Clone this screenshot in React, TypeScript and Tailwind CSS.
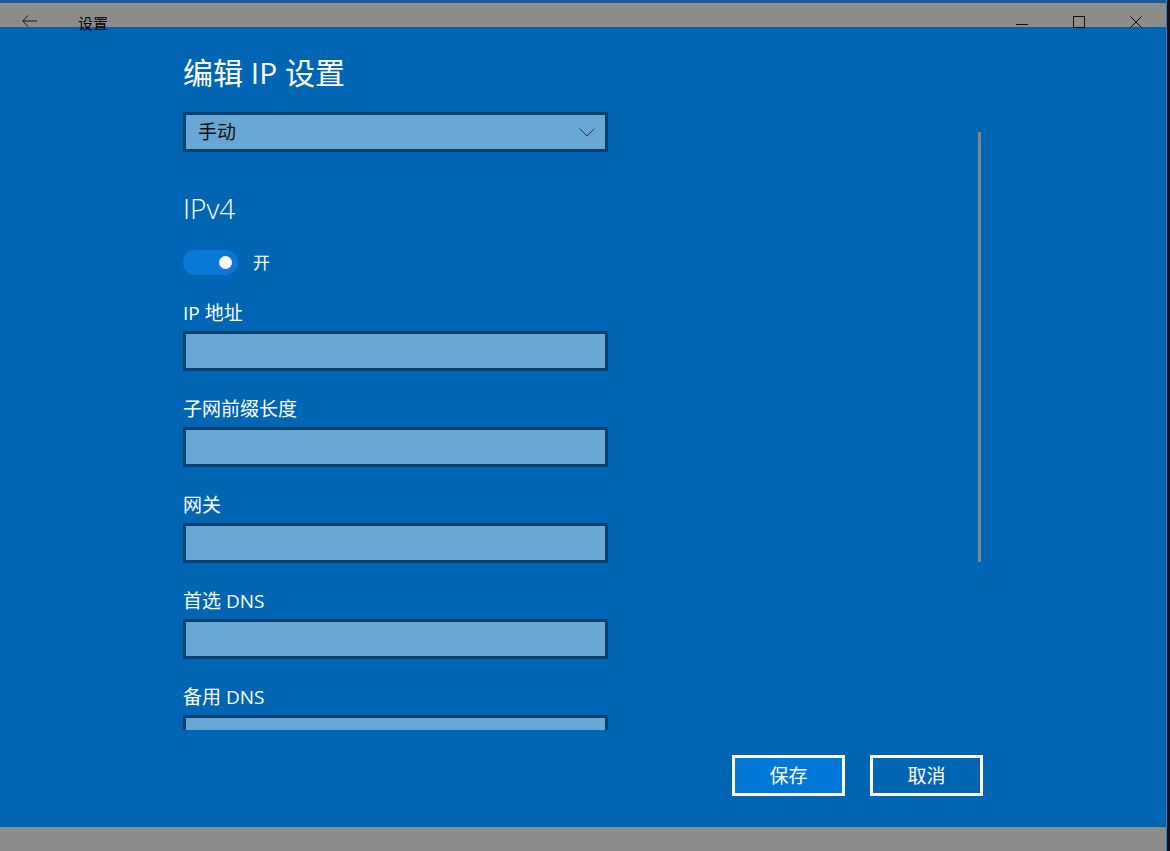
const font = "font-['Open_Sans','Noto_Sans_CJK_SC',sans-serif]";

function TitleBar() {
  return (
    <div className="relative z-10 flex h-[24px] items-start bg-[#8c8c8c] pl-[22px] pr-[24px] text-black">
      <svg viewBox="0 0 15 12" className="mt-[12px] h-[12px] w-[15px]" aria-hidden="true">
        <path d="M6 0.5 L0.8 6 L6 11.5 M0.8 6 H15" fill="none" stroke="#111" strokeWidth="1" />
      </svg>
      <span className="ml-[41px] mt-[10px] text-[15px] leading-[20px]">设置</span>
      <div className="flex-1" />
      <svg viewBox="0 0 12 12" className="mt-[15px] h-[12px] w-[12px]" aria-hidden="true">
        <line x1="0" y1="6.5" x2="12" y2="6.5" stroke="#111" strokeWidth="1" />
      </svg>
      <svg viewBox="0 0 12 12" className="ml-[45px] mt-[13px] h-[12px] w-[12px]" aria-hidden="true">
        <rect x="0.5" y="0.5" width="11" height="11" fill="none" stroke="#111" strokeWidth="1" />
      </svg>
      <svg viewBox="0 0 12 12" className="ml-[45px] mt-[13px] h-[12px] w-[12px]" aria-hidden="true">
        <path d="M0.5 0.5 L11.5 11.5 M11.5 0.5 L0.5 11.5" fill="none" stroke="#111" strokeWidth="1" />
      </svg>
    </div>
  );
}

function Field({ label }: { label: string }) {
  return (
    <div className="flex flex-col">
      <p className="mt-[26px] text-[19px] leading-[24px] text-white">{label}</p>
      <div className="mt-[6px] h-[40px] w-[425px] shrink-0 border-[3px] border-[#0a3f6e] bg-[#68a6d3]" />
    </div>
  );
}

export default function App() {
  return (
    <div className={`flex h-[851px] w-[1170px] bg-[#11141c] ${font}`}>
      <div className="flex w-[1167px] flex-col border-r border-[#2a82d4]">
        <div className="h-[3px] bg-[#1d5c9c]" />
        <TitleBar />

        <div className="relative flex h-[800px] flex-col bg-[#0066b3]">
          <div className="h-[703px] overflow-hidden pl-[183px]">
            <h1 className="mt-[28px] text-[30px] leading-[36px] text-white">编辑 IP 设置</h1>

            <div className="mt-[21px] flex h-[40px] w-[425px] items-center justify-between border-[3px] border-[#0a3f6e] bg-[#68a6d3] pl-[12px] pr-[10px]">
              <span className="text-[19px] leading-[24px] text-[#111]">手动</span>
              <svg viewBox="0 0 16 9" className="h-[9px] w-[16px]" aria-hidden="true">
                <path d="M0.5 0.5 L8 8 L15.5 0.5" fill="none" stroke="#333" strokeWidth="1" />
              </svg>
            </div>

            <h2 className="mt-[38px] text-[28px] font-light leading-[36px] text-white">IPv4</h2>

            <div className="mt-[24px] flex items-center">
              <div className="flex h-[25px] w-[55px] items-center justify-end rounded-full bg-[#0a78d6] pr-[6px]">
                <div className="h-[13px] w-[13px] rounded-full bg-white" />
              </div>
              <span className="ml-[15px] text-[17px] leading-[24px] text-white">开</span>
            </div>

            <Field label="IP 地址" />
            <Field label="子网前缀长度" />
            <Field label="网关" />
            <Field label="首选 DNS" />
            <Field label="备用 DNS" />
          </div>

          <div className="absolute left-[978px] top-[105px] h-[430px] w-[3px] bg-[#858585]" />

          <div className="flex justify-end gap-[25px] pr-[183px] pt-[25px]">
            <button className="flex h-[41px] w-[113px] items-center justify-center border-[3px] border-white bg-[#0078d7] text-[19px] leading-[24px] text-white">
              保存
            </button>
            <button className="flex h-[41px] w-[113px] items-center justify-center border-[3px] border-white text-[19px] leading-[24px] text-white">
              取消
            </button>
          </div>
        </div>

        <div className="flex-1 bg-[#8c8c8c]" />
      </div>
    </div>
  );
}
